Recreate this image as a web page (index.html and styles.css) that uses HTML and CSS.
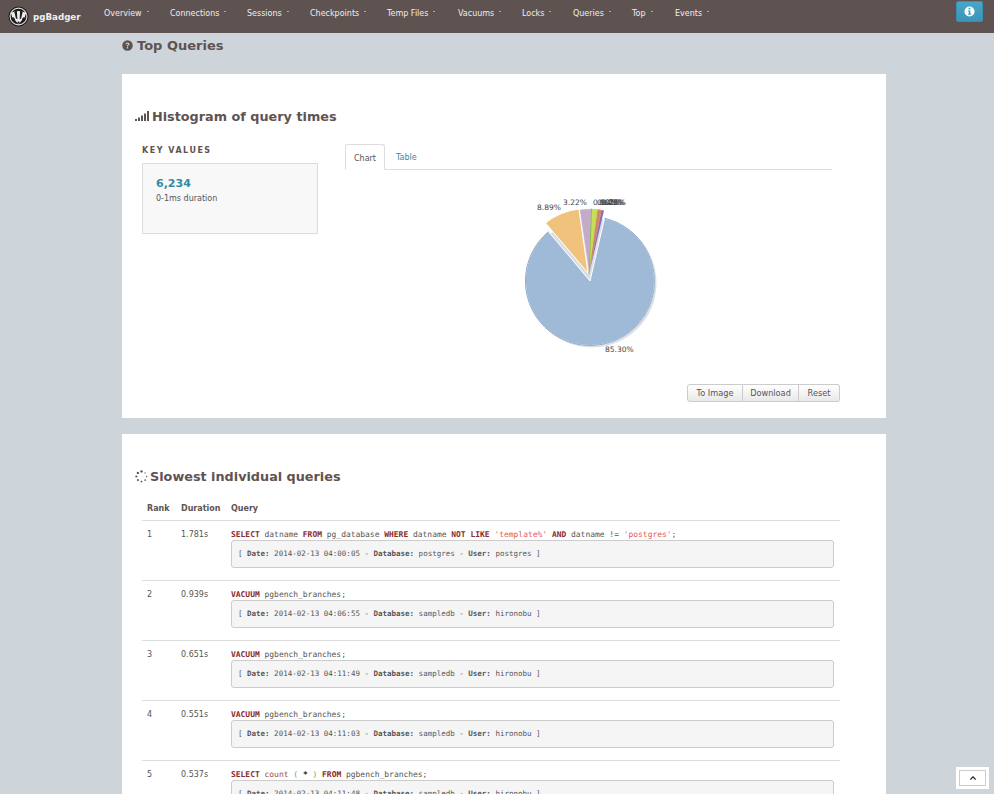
FILE: index.html
```html
<!DOCTYPE html>
<html lang="en">
<head>
    <meta charset="UTF-8">
    <title>pgBadger</title>
    <link rel="stylesheet" href="styles.css">
</head>
<body>

    <nav class="navbar">
        <a class="brand">
            <svg class="brand-logo" viewBox="0 0 22 22">
                <circle cx="11" cy="11" r="10.5" fill="#1d1b1b"/>
                <circle cx="11" cy="11" r="8.800" fill="#1d1b1b" stroke="#ddd" stroke-width="1.200"/>
                <path d="M3 7 Q11 3.500 19 7 L17.500 12 Q15 11 14.500 15 L11 19.500 L7.500 15 Q7 11 4.500 12 Z" fill="#eee"/>
                <path d="M6.500 5.800 L9.300 5 L9.800 14 L8.300 13 Z M15.500 5.800 L12.700 5 L12.200 14 L13.700 13 Z" fill="#1d1b1b"/>
                <circle cx="11" cy="17.500" r="1.200" fill="#1d1b1b"/>
            </svg>
            pgBadger
        </a>
        <ul class="menu">
            <li class="menu-item w-overview">Overview</li>
            <li class="menu-item w-connections">Connections</li>
            <li class="menu-item w-sessions">Sessions</li>
            <li class="menu-item w-checkpoints">Checkpoints</li>
            <li class="menu-item w-tempfiles">Temp Files</li>
            <li class="menu-item w-vacuums">Vacuums</li>
            <li class="menu-item w-locks">Locks</li>
            <li class="menu-item w-queries">Queries</li>
            <li class="menu-item w-top">Top</li>
            <li class="menu-item">Events</li>
        </ul>
        <button class="info-btn">
            <svg viewBox="0 0 12 12" width="11" height="11">
                <circle cx="6" cy="6" r="5.500" fill="#fff"/>
                <rect x="5" y="2" width="2" height="1.800" fill="#3f9dc0"/>
                <path d="M4.300 5h2.700v3.500h0.900v1H4.300v-1h0.900V6H4.300z" fill="#3f9dc0"/>
            </svg>
        </button>
    </nav>

    <div class="container">
        <h2 class="page-title">
            <svg class="title-icon" viewBox="0 0 12 12">
                <circle cx="6" cy="6" r="5.700" fill="#5f5352"/>
                <path d="M3.900 4.600 Q4 2.700 6 2.700 Q8.100 2.700 8.100 4.400 Q8.100 5.400 7 6 Q6.500 6.300 6.500 7H5.300 Q5.300 5.700 6.200 5.200 Q6.800 4.900 6.800 4.400 Q6.800 3.800 6 3.800 Q5.200 3.800 5.100 4.700Z" fill="#cdd4da"/>
                <rect x="5.300" y="7.800" width="1.300" height="1.400" fill="#cdd4da"/>
            </svg>
            Top Queries
        </h2>

        <!-- histogram -->
        <section class="card card-histogram">
            <h3 class="card-title">
                <svg class="signal-icon" viewBox="0 0 14 10">
                    <rect x="0" y="8" width="2" height="2"/>
                    <rect x="3" y="6.500" width="2" height="3.500"/>
                    <rect x="6" y="4.500" width="2" height="5.500"/>
                    <rect x="9" y="2.500" width="2" height="7.500"/>
                    <rect x="12" y="0" width="2" height="10"/>
                </svg>
                Histogram of query times
            </h3>
            <div class="chart-row">
                <div class="key-values">
                    <h4>KEY VALUES</h4>
                    <div class="key-box">
                        <div class="key-number">6,234</div>
                        <div class="key-label">0-1ms duration</div>
                    </div>
                </div>
                <div class="chart-col">
                    <ul class="tabs">
                        <li class="tab active">Chart</li>
                        <li class="tab">Table</li>
                    </ul>
                    <svg class="pie" viewBox="345 170 487 205">
                        <circle cx="592" cy="283" r="64.500" fill="#d9dfe5"/>
                        <path d="M590 281 L604.500 218.200 A64.500 64.500 0 1 1 548.500 231.600 Z" fill="#9fbad7" stroke="#fff" stroke-width="1"/>
                        <path d="M604.500 218.200 A64.500 64.500 0 1 1 548.500 231.600" fill="none" stroke="#8fabc9" stroke-width="1"/>
                        <path d="M588 273 L545.500 223 A64.500 64.500 0 0 1 579 209.100 Z" fill="#f0c27c" stroke="#fff" stroke-width="1"/>
                        <path d="M589 274 L579.500 209.500 A65 65 0 0 1 591.500 208.800 Z" fill="#c4abc9" stroke="#fff" stroke-width="0.600"/>
                        <path d="M589 274 L591.500 208.800 A65 65 0 0 1 597.500 209.300 Z" fill="#c5de55"/>
                        <path d="M589 274 L591.500 208.800" fill="none" stroke="#7fa83e" stroke-width="0.800"/>
                        <path d="M589 274 L597.500 209.300 A65 65 0 0 1 601.500 210 Z" fill="#d08a5e"/>
                        <path d="M589 274 L601.500 210 A65 65 0 0 1 604 210.600 Z" fill="#8e6bb5"/>
                        <g class="pie-labels">
                            <text x="537" y="210">8.89%</text>
                            <text x="563" y="205">3.22%</text>
                            <text x="593" y="205">0.90%</text>
                            <text x="597" y="205">0.62%</text>
                            <text x="599" y="205">0.45%</text>
                            <text x="601" y="205">0.28%</text>
                            <text x="602" y="205">0.16%</text>
                            <text x="605" y="352">85.30%</text>
                        </g>
                    </svg>
                </div>
            </div>
            <div class="btn-group">
                <button class="btn btn-image">To Image</button>
                <button class="btn btn-download">Download</button>
                <button class="btn btn-reset">Reset</button>
            </div>
        </section>

        <!-- slowest queries -->
        <section class="card card-slowest">
            <h3 class="card-title">
                <svg class="spinner-icon" viewBox="0 0 14 14">
                    <circle cx="7" cy="1.500" r="1.300"/>
                    <circle cx="10.900" cy="3.100" r="0.700"/>
                    <circle cx="12.500" cy="7" r="0.700"/>
                    <circle cx="10.900" cy="10.900" r="0.900"/>
                    <circle cx="7" cy="12.500" r="1"/>
                    <circle cx="3.100" cy="10.900" r="1.100"/>
                    <circle cx="1.500" cy="7" r="1.200"/>
                    <circle cx="3.100" cy="3.100" r="1.300"/>
                </svg>
                Slowest individual queries
            </h3>
            <table class="queries">
                <thead>
                    <tr><th class="col-rank">Rank</th><th class="col-duration">Duration</th><th>Query</th></tr>
                </thead>
                <tbody>
                    <tr>
                        <td>1</td>
                        <td>1.781s</td>
                        <td>
                            <div class="sql"><b>SELECT</b> datname <b>FROM</b> pg_database <b>WHERE</b> datname <b>NOT</b> <b>LIKE</b> <i>'template%'</i> <b>AND</b> datname != <i>'postgres'</i>;</div>
                            <div class="meta">[ <b>Date:</b> 2014-02-13 04:00:05 - <b>Database:</b> postgres - <b>User:</b> postgres ]</div>
                        </td>
                    </tr>
                    <tr>
                        <td>2</td>
                        <td>0.939s</td>
                        <td>
                            <div class="sql"><b>VACUUM</b> pgbench_branches;</div>
                            <div class="meta">[ <b>Date:</b> 2014-02-13 04:06:55 - <b>Database:</b> sampledb - <b>User:</b> hironobu ]</div>
                        </td>
                    </tr>
                    <tr>
                        <td>3</td>
                        <td>0.651s</td>
                        <td>
                            <div class="sql"><b>VACUUM</b> pgbench_branches;</div>
                            <div class="meta">[ <b>Date:</b> 2014-02-13 04:11:49 - <b>Database:</b> sampledb - <b>User:</b> hironobu ]</div>
                        </td>
                    </tr>
                    <tr>
                        <td>4</td>
                        <td>0.551s</td>
                        <td>
                            <div class="sql"><b>VACUUM</b> pgbench_branches;</div>
                            <div class="meta">[ <b>Date:</b> 2014-02-13 04:11:03 - <b>Database:</b> sampledb - <b>User:</b> hironobu ]</div>
                        </td>
                    </tr>
                    <tr>
                        <td>5</td>
                        <td>0.537s</td>
                        <td>
                            <div class="sql"><b>SELECT</b> <span class="fn">count</span> <span class="paren">(</span> <strong>*</strong> <span class="paren">)</span> <b>FROM</b> pgbench_branches;</div>
                            <div class="meta">[ <b>Date:</b> 2014-02-13 04:11:48 - <b>Database:</b> sampledb - <b>User:</b> hironobu ]</div>
                        </td>
                    </tr>
                </tbody>
            </table>
        </section>
    </div>

    <a class="back-top">
        <span class="back-top-inner">
            <svg viewBox="0 0 8 5" width="6" height="4"><path d="M0.500 4.500 L4 1 L7.500 4.500" fill="none" stroke="#222" stroke-width="1.500"/></svg>
        </span>
    </a>

</body>
</html>
```

FILE: styles.css
```css
html, body {
    height: 100%;
    overflow: hidden;
}

body {
    margin: 0;
    background-color: #cdd4da;
    color: #555;
    font-family: "DejaVu Sans", Verdana, sans-serif;
    font-size: 8px;
}

/* Top bar */
.navbar {
    display: flex;
    align-items: center;
    height: 33px;
    background-color: #5f5352;
    color: #eee;
}

.brand {
    display: flex;
    align-items: center;
    gap: 4px;
    width: 95px;
    padding-left: 8px;
    box-sizing: border-box;
    color: #eee;
    font-size: 8.700px;
    font-weight: bold;
}

.brand-logo {
    width: 21px;
    height: 21px;
}

.menu {
    display: flex;
    flex: 1;
    margin: 0 0 0 9px;
    padding: 0 0 7px;
    list-style: none;
}

.menu-item::after {
    content: "";
    display: inline-block;
    width: 2px;
    height: 1px;
    margin-left: 5px;
    vertical-align: 4px;
    background-color: #aaa;
}

.w-overview { width: 66px; }
.w-connections { width: 77px; }
.w-sessions { width: 63px; }
.w-checkpoints { width: 77px; }
.w-tempfiles { width: 71px; }
.w-vacuums { width: 64px; }
.w-locks { width: 51px; }
.w-queries { width: 59px; }
.w-top { width: 43px; }

.info-btn {
    display: flex;
    align-items: center;
    justify-content: center;
    width: 27px;
    height: 21px;
    margin: 0 11px 10px 0;
    padding: 0;
    border: 1px solid #3a8fb0;
    border-radius: 2px;
    background: linear-gradient(#4aa6c8, #3a95b8);
}

/* Content */
.container {
    width: 764px;
    margin-left: 122px;
}

.page-title {
    display: flex;
    align-items: center;
    gap: 4px;
    height: 24px;
    margin: 0 0 17px;
    color: #5f5352;
    font-size: 13px;
}

.title-icon {
    width: 11px;
    height: 11px;
}

.card {
    margin-bottom: 16px;
    background-color: #fff;
}

.card-histogram {
    height: 344px;
    padding: 33px 46px 0 20px;
    box-sizing: border-box;
}

.card-title {
    display: flex;
    align-items: center;
    height: 18px;
    margin: 0 0 0 -7px;
    color: #5f5352;
    font-size: 12.800px;
}

.signal-icon {
    width: 14px;
    height: 10px;
    margin-right: 3px;
    fill: #5f5352;
}

.spinner-icon {
    width: 13px;
    height: 13px;
    margin-right: 2px;
    fill: #5f5352;
}

.chart-row {
    display: flex;
    margin-top: 19px;
}

.key-values {
    width: 176px;
    margin-right: 27px;
}

.key-values h4 {
    margin: 0;
    padding-top: 1px;
    color: #5f5352;
    font-size: 8px;
    line-height: 12px;
    letter-spacing: 1.500px;
}

.key-box {
    height: 71px;
    margin-top: 6px;
    padding: 12px 13px;
    box-sizing: border-box;
    border: 1px solid #ddd;
    background-color: #f8f8f8;
}

.key-number {
    color: #328aa5;
    font-size: 11px;
    font-weight: bold;
    line-height: 15px;
}

.key-label {
    margin-top: 2px;
    line-height: 12px;
}

.chart-col {
    width: 487px;
}

.tabs {
    display: flex;
    height: 26px;
    margin: 0;
    padding: 0;
    box-sizing: border-box;
    border-bottom: 1px solid #ddd;
    list-style: none;
}

.tab {
    height: 26px;
    padding: 1px 11px 0;
    box-sizing: border-box;
    color: #328aa5;
    line-height: 26px;
}

.tab.active {
    width: 40px;
    padding: 1px 0 0;
    border: 1px solid #ddd;
    border-bottom-color: #fff;
    border-radius: 3px 3px 0 0;
    color: #555;
    text-align: center;
}

.pie {
    display: block;
    width: 487px;
    height: 205px;
}

.pie-labels text {
    fill: #444;
    font-family: "DejaVu Sans", Verdana, sans-serif;
    font-size: 7.500px;
}

.btn-group {
    display: flex;
    justify-content: flex-end;
    margin-top: 9px;
}

.btn {
    height: 18px;
    padding: 0;
    border: 1px solid #ccc;
    border-left-width: 0;
    background: linear-gradient(#fff, #e8e8e8);
    color: #555;
    font-family: "DejaVu Sans", Verdana, sans-serif;
    font-size: 8.200px;
}

.btn-image {
    width: 56px;
    border-left-width: 1px;
    border-radius: 3px 0 0 3px;
}

.btn-download { width: 56px; }

.btn-reset {
    width: 41px;
    border-radius: 0 3px 3px 0;
}

.card-slowest {
    padding: 33px 46px 40px 20px;
}

.queries {
    width: 698px;
    margin-top: 14px;
    border-collapse: collapse;
    table-layout: fixed;
}

.queries th {
    height: 12px;
    padding: 3px 0 6px 5px;
    color: #5f5352;
    font-size: 8px;
    text-align: left;
}

.queries th:nth-child(n+2) { padding-left: 0; }
.col-rank { width: 34px; }
.col-duration { width: 50px; }

.queries td {
    padding: 8px 6px 12px 0;
    border-top: 1px solid #ddd;
    vertical-align: top;
    line-height: 11px;
}

.queries td:first-child { padding-left: 5px; }

.sql {
    height: 11px;
    font-family: "DejaVu Sans Mono", "Liberation Mono", monospace;
    font-size: 7.960px;
    line-height: 11px;
    white-space: pre;
}

.sql b { color: #862a2a; }
.sql i { color: #e05a5a; font-style: normal; }
.sql .fn { color: #a5483c; }
.sql .paren { color: #5aaa7a; }
.sql strong { color: #222; }

.meta {
    height: 28px;
    padding-left: 6px;
    box-sizing: border-box;
    border: 1px solid #ccc;
    border-radius: 3px;
    background-color: #f5f5f5;
    font-family: "DejaVu Sans Mono", "Liberation Mono", monospace;
    font-size: 7.500px;
    line-height: 26px;
    white-space: pre;
}

/* Back to top */
.back-top {
    position: fixed;
    right: 5px;
    bottom: 5px;
    display: flex;
    width: 33px;
    height: 22px;
    padding: 3px;
    box-sizing: border-box;
    background-color: #fff;
}

.back-top-inner {
    display: flex;
    flex: 1;
    align-items: center;
    justify-content: center;
    border: 1px solid #ccc;
}
```
